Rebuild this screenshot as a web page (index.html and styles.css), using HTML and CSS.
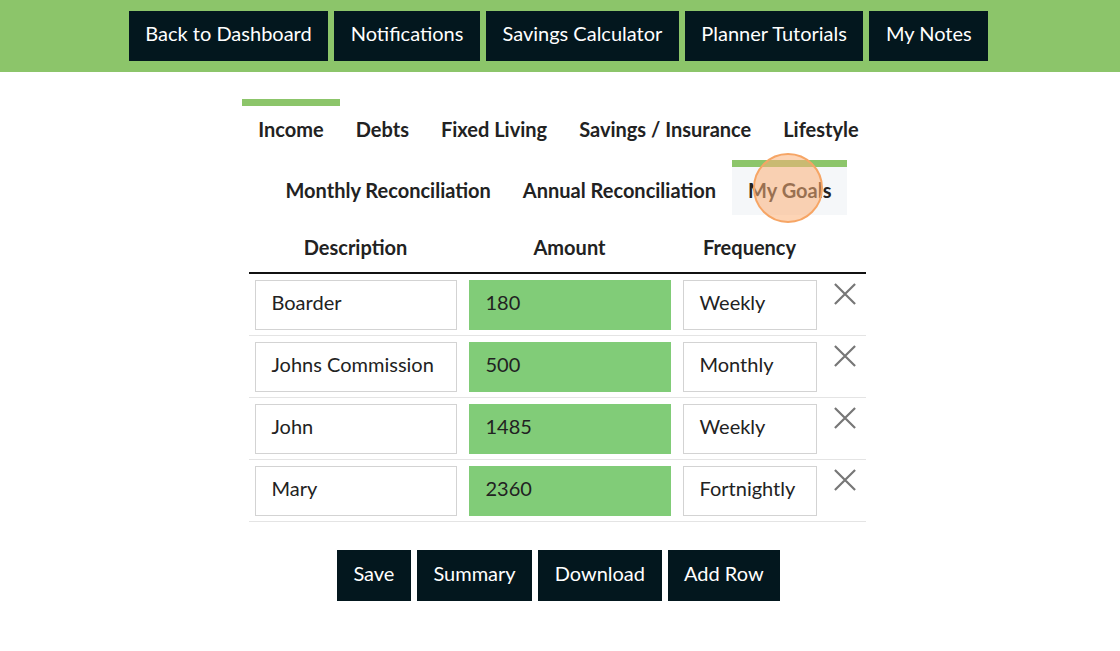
FILE: index.html
```html
<!DOCTYPE html>
<html>
<head>
<meta charset="utf-8">
<link rel="stylesheet" href="styles.css">
</head>
<body>
<nav class="topbar">
  <button class="btn">Back to Dashboard</button>
  <button class="btn">Notifications</button>
  <button class="btn">Savings Calculator</button>
  <button class="btn">Planner Tutorials</button>
  <button class="btn">My Notes</button>
</nav>
<div class="tabs first">
  <div class="tab marked">Income</div>
  <div class="tab">Debts</div>
  <div class="tab">Fixed Living</div>
  <div class="tab">Savings / Insurance</div>
  <div class="tab">Lifestyle</div>
</div>
<div class="tabs second">
  <div class="tab">Monthly Reconciliation</div>
  <div class="tab">Annual Reconciliation</div>
  <div class="tab marked active">My Goals<span class="click"></span></div>
</div>
<table class="grid">
  <colgroup><col class="c1"><col class="c2"><col class="c3"><col class="c4"></colgroup>
  <thead>
    <tr><th>Description</th><th>Amount</th><th>Frequency</th><th></th></tr>
  </thead>
  <tbody>
    <tr><td><div class="field">Boarder</div></td><td><div class="field amt">180</div></td><td><div class="field">Weekly</div></td><td><svg class="x" viewBox="0 0 24 24"><path d="M1 1L23 23M23 1L1 23"/></svg></td></tr>
    <tr><td><div class="field">Johns Commission</div></td><td><div class="field amt">500</div></td><td><div class="field">Monthly</div></td><td><svg class="x" viewBox="0 0 24 24"><path d="M1 1L23 23M23 1L1 23"/></svg></td></tr>
    <tr><td><div class="field">John</div></td><td><div class="field amt">1485</div></td><td><div class="field">Weekly</div></td><td><svg class="x" viewBox="0 0 24 24"><path d="M1 1L23 23M23 1L1 23"/></svg></td></tr>
    <tr><td><div class="field">Mary</div></td><td><div class="field amt">2360</div></td><td><div class="field">Fortnightly</div></td><td><svg class="x" viewBox="0 0 24 24"><path d="M1 1L23 23M23 1L1 23"/></svg></td></tr>
  </tbody>
</table>
<div class="actions">
  <button class="btn">Save</button>
  <button class="btn">Summary</button>
  <button class="btn">Download</button>
  <button class="btn">Add Row</button>
</div>
</body>
</html>
```
FILE: styles.css
```css
* { box-sizing: border-box; }
body {
  margin: 0;
  font-family: Lato, "Open Sans", sans-serif;
  color: #222;
  background: #fff;
}
.topbar {
  background: #8cc56a;
  height: 72px;
  display: flex;
  justify-content: center;
  align-items: center;
  gap: 6px;
  padding-right: 3px;
}
.btn {
  background: #03171e;
  color: #fff;
  border: none;
  font-family: Lato, sans-serif;
  font-size: 20px;
  height: 50px;
  padding: 0 16.5px 6px;
}
.tabs {
  display: flex;
  justify-content: center;
  padding-right: 3px;
}
.tabs.first { margin-top: 27px; }
.tab {
  position: relative;
  border-top: 7px solid transparent;
  height: 61px;
  line-height: 46px;
  padding: 0 16px;
  font-size: 20px;
  font-weight: 700;
  color: #222;
}
.second .tab { height: 55px; }
.tab.marked { border-top-color: #8cc56a; }
.tab.active { background: #f5f7f9; }
.click {
  position: absolute;
  left: 21px;
  top: -14px;
  width: 70px;
  height: 70px;
  border-radius: 50%;
  border: 2px solid #f6a565;
  background: rgba(251, 176, 120, 0.55);
}
.grid {
  width: 617px;
  margin: 0 auto;
  position: relative;
  left: -3px;
  border-collapse: collapse;
  table-layout: fixed;
}
.c1 { width: 214px; }
.c2 { width: 214px; }
.c3 { width: 146px; }
.c4 { width: 43px; }
.grid th {
  font-size: 20px;
  font-weight: 700;
  line-height: 26px;
  padding: 19px 0 12px;
  border-bottom: 2px solid #111;
  text-align: center;
}
.grid td {
  padding: 6px 6px 5px 6px;
  border-bottom: 1px solid #e4e4e4;
  vertical-align: top;
}
.field {
  height: 50px;
  border: 1px solid #d3d3d3;
  padding-left: 16px;
  font-size: 20px;
  line-height: 43px;
  color: #222;
  white-space: nowrap;
  overflow: hidden;
}
.field.amt { background: #81cc78; border-color: #81cc78; }
.x {
  display: block;
  width: 24px;
  height: 22px;
  margin: 3px 0 0 4px;
  fill: none;
  stroke: #777;
  stroke-width: 2.4;
}
.actions {
  display: flex;
  justify-content: center;
  gap: 6px;
  margin-top: 28px;
  padding-right: 3px;
}
.actions .btn { height: 51px; padding: 0 16.5px 5px; }
```
